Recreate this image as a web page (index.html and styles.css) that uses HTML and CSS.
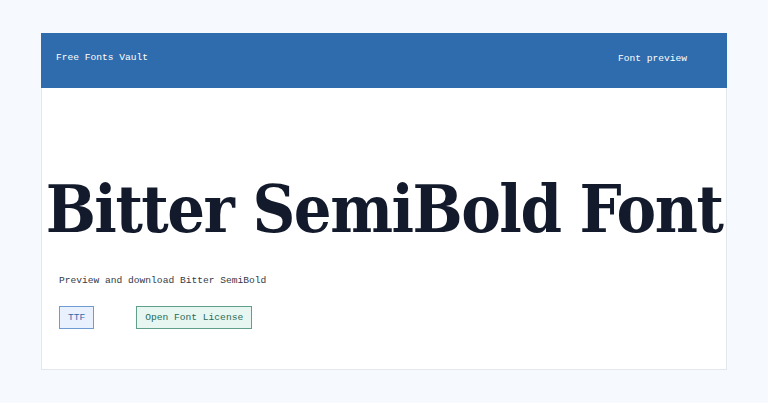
FILE: index.html
```
<!DOCTYPE html>
<html lang="en">
<head>
    <meta charset="UTF-8">
    <meta name="viewport" content="width=device-width, initial-scale=1.0">
    <title>Bitter SemiBold Font</title>
    <link rel="stylesheet" href="styles.css">
</head>
<body>
    <div class="card">
        <header class="topbar">
            <span class="brand">Free Fonts Vault</span>
            <span class="nav">Font preview</span>
        </header>
        <main class="content">
            <h1 class="specimen">Bitter SemiBold Font</h1>
            <p class="lead">Preview and download Bitter SemiBold</p>
            <div class="tags">
                <span class="tag tag-format">TTF</span>
                <span class="tag tag-license">Open Font License</span>
            </div>
        </main>
    </div>
</body>
</html>
```

FILE: styles.css
```
body {
    margin: 0;
    padding: 33px 41px;
    background: #f6f9fe;
    font-family: "Liberation Mono", monospace;
    font-size: 9.6px;
}
.card {
    background: #ffffff;
    border: 1px solid #e3e8ef;
    height: 335px;
}
.topbar {
    display: flex;
    justify-content: space-between;
    align-items: center;
    height: 55px;
    margin: -1px -1px 0;
    padding: 0 40px 0 15px;
    background: #2f6cad;
    color: #ffffff;
}
.brand {
    margin-top: -6px;
}
.nav {
    margin-top: -4px;
}
.content {
    padding: 0 17px;
}
.specimen {
    margin: 86px -17px 0;
    text-align: center;
    white-space: nowrap;
    font-family: "DejaVu Serif Condensed", "DejaVu Serif", serif;
    font-stretch: condensed;
    font-weight: bold;
    font-size: 66px;
    letter-spacing: -1.5px;
    line-height: 70px;
    color: #121a2b;
}
.lead {
    margin: 31px 0 0;
    color: #333a48;
}
.tags {
    display: flex;
    gap: 42px;
    margin-top: 20px;
}
.tag {
    padding: 5px 8px;
    border: 1px solid;
}
.tag-format {
    background: #e8f1fd;
    border-color: #6f9bd3;
    color: #2f6cad;
}
.tag-license {
    background: #e7f6f1;
    border-color: #5f9f8c;
    color: #1f6b58;
}
```
